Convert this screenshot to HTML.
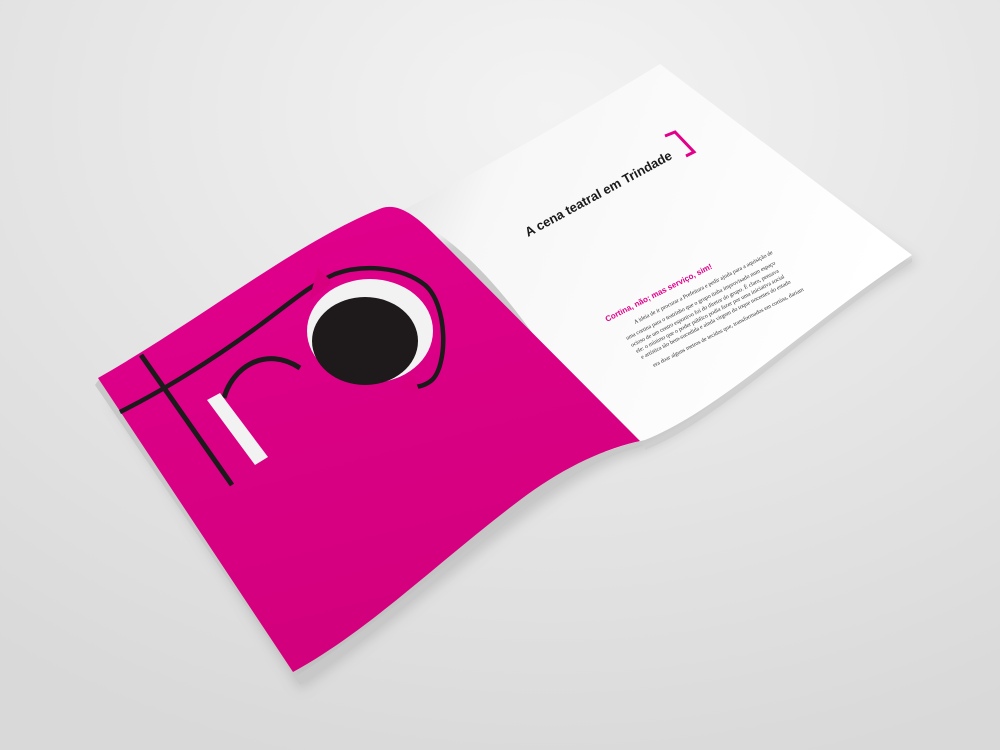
<!DOCTYPE html>
<html><head><style>
html,body{margin:0;padding:0;width:1000px;height:750px;overflow:hidden;background:#e4e4e4}
</style></head><body>
<svg width="1000" height="750" viewBox="0 0 1000 750" xmlns="http://www.w3.org/2000/svg">
<defs>
<radialGradient id="bg" cx="0.55" cy="0.15" r="0.9">
<stop offset="0" stop-color="#f3f3f3"/><stop offset="1" stop-color="#d9d9d9"/>
</radialGradient>
<linearGradient id="wp" x1="0" y1="0" x2="1" y2="0.3">
<stop offset="0" stop-color="#dcdcdc"/><stop offset="0.25" stop-color="#f7f7f7"/><stop offset="1" stop-color="#ffffff"/>
</linearGradient>
<linearGradient id="mg" x1="0" y1="0" x2="0.3" y2="1">
<stop offset="0" stop-color="#e2008e"/><stop offset="1" stop-color="#d2007c"/>
</linearGradient>
<filter id="sh" x="-10%" y="-10%" width="120%" height="130%"><feGaussianBlur stdDeviation="6"/></filter>
</defs>
<rect width="1000" height="750" fill="url(#bg)"/>
<path d="M110,400 L300,690 C420,610 560,470 640,452 C720,420 800,330 918,262 L700,120 Z" fill="#999" opacity="0.4" filter="url(#sh)"/>
<path d="M95,385 L300,685 C420,610 540,470 640,447 L645,444 C560,455 420,600 296,676 L100,378 Z" fill="#c8c8c8"/>
<path d="M645,445 C720,415 800,330 912,258 L912,262 C800,335 720,420 645,450 Z" fill="#cfcfcf"/>
<!-- white page -->
<path d="M400,212 C440,190 520,150 660,64 L912,255 C800,330 720,410 645,440 C630,443 615,448 605,452 C540,330 470,240 400,212 Z" fill="url(#wp)"/>
<!-- magenta page -->
<path d="M98,378 C200,320 300,240 382,208 C398,203 415,214 440,240 L640,441 C600,450 560,470 520,500 C440,560 370,630 293,672 Z" fill="url(#mg)"/>
<!-- artwork -->
<path d="M120,412 C160,392 210,362 260,325 C290,303 310,285 335,274 C360,265 400,265 425,285 C448,305 448,365 432,380 C425,386 415,388 405,387" fill="none" stroke="#1d1a1b" stroke-width="4.5"/>
<ellipse cx="370" cy="331" rx="63" ry="52" fill="#f2f2f2"/>
<path d="M309,300 L333,283 L318,268 Z" fill="#d8007f"/>
<path d="M398,388 L420,393 L412,372 Z" fill="#d8007f"/>
<ellipse cx="365" cy="341" rx="53" ry="44" fill="#1e1a1b"/>
<line x1="141" y1="355" x2="232" y2="485" stroke="#1d1a1b" stroke-width="5"/>
<path d="M224,398 C232,368 265,345 300,368" fill="none" stroke="#1d1a1b" stroke-width="5"/>
<polygon points="207,400 220,393 268,457 255,465" fill="#f2f2f2"/>
<!-- text -->
<g font-family="'Liberation Sans',sans-serif">
<text x="0" y="0" font-size="13" font-weight="bold" fill="#1a1a1a" transform="translate(528,237) rotate(-28.5)">A cena teatral em Trindade</text>
<path d="M665,136 L675,132 L694,152 L686,156" fill="none" stroke="#e2008a" stroke-width="3"/>
<text x="0" y="0" font-size="8" font-weight="bold" fill="#e2008a" transform="translate(607,322) rotate(-27)">Cortina, não; mas serviço, sim!</text>
<g font-family="'Liberation Serif',serif" font-size="5.8" fill="#333">
<text transform="translate(635,324) rotate(-27)">A ideia de ir procurar a Prefeitura e pedir ajuda para a aquisição de</text>
<text transform="translate(627,340) rotate(-27)">uma cortina para o teatrinho que o grupo tinha improvisado num espaço</text>
<text transform="translate(632,347) rotate(-27)">ocioso de um centro esportivo foi do diretor do grupo. É claro, pensava</text>
<text transform="translate(637,353) rotate(-27)">ele: o mínimo que o poder público podia fazer por uma iniciativa social</text>
<text transform="translate(642,359) rotate(-27)">e artística tão bem-sucedida e ainda virgem do toque nocentes do estado</text>
<text transform="translate(654,367) rotate(-27)">era doar alguns metros de tecidos que, transformados em cortina, dariam</text>
</g>
</g>
</svg>
</body></html>
